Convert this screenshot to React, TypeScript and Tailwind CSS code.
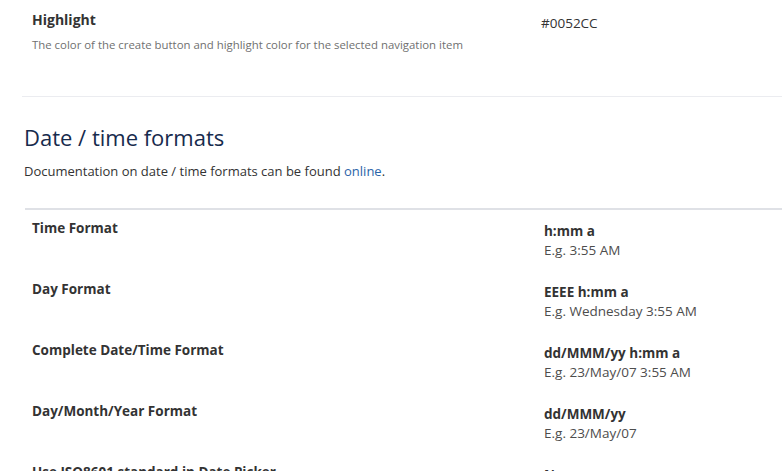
import React from 'react'

const formats = [
  { label: 'Time Format', value: 'h:mm a', example: 'E.g. 3:55 AM' },
  { label: 'Day Format', value: 'EEEE h:mm a', example: 'E.g. Wednesday 3:55 AM' },
  { label: 'Complete Date/Time Format', value: 'dd/MMM/yy h:mm a', example: 'E.g. 23/May/07 3:55 AM' },
  { label: 'Day/Month/Year Format', value: 'dd/MMM/yy', example: 'E.g. 23/May/07' },
  { label: 'Use ISO8601 standard in Date Picker', value: 'No', example: '' },
]

export default function App() {
  return (
    <div className="h-[471px] w-[782px] overflow-hidden bg-white font-['Open_Sans',sans-serif] text-[#333]">
      {/* look and feel row */}
      <div className="flex pl-[32px] pt-[10px]">
        <div className="w-[509px]">
          <div className="text-[14px] font-bold leading-[20px] text-[#333]">Highlight</div>
          <div className="mt-[7px] text-[11.4px] leading-[16px] text-[#707070]">
            The color of the create button and highlight color for the selected navigation item
          </div>
        </div>
        <div className="pt-[3px] text-[13.5px] leading-[20px] text-[#333]">#0052CC</div>
      </div>

      <div className="ml-[22px] mt-[43px] h-px bg-[#ebecf0]" />

      {/* date / time formats */}
      <div className="pl-[24px] pt-[24px]">
        <h2 className="text-[22px] font-normal leading-[32px] text-[#172b4d]">Date / time formats</h2>
        <p className="mt-[8px] text-[13px] leading-[20px] text-[#333]">
          Documentation on date / time formats can be found{' '}
          <a href="#" className="text-[#2a64a8]">online</a>.
        </p>
      </div>

      <div className="ml-[25px] mt-[27px] border-t-2 border-[#dfe1e6]">
        {formats.map((f) => (
          <div key={f.label} className="flex h-[61px]">
            <div className="w-[519px] pl-[7px] pt-[8px] text-[13.5px] font-bold leading-[20px] text-[#333]">
              {f.label}
            </div>
            <div className="pt-[11px] text-[13.5px] leading-[20px]">
              <div className="font-bold text-[#333]">{f.value}</div>
              {f.example && <div className="-mt-px text-[#4d4d4d]">{f.example}</div>}
            </div>
          </div>
        ))}
      </div>
    </div>
  )
}
